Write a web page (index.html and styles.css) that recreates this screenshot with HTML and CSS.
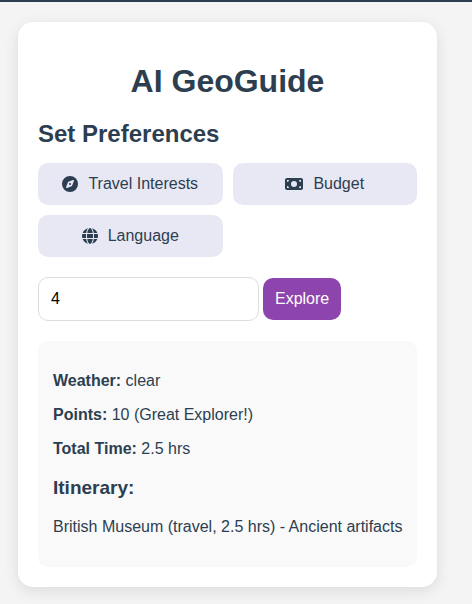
FILE: index.html
```html
<!DOCTYPE html>
<html lang="en">
<head>
<meta charset="utf-8">
<meta name="viewport" content="width=device-width, initial-scale=1">
<title>AI GeoGuide</title>
<link rel="stylesheet" href="styles.css">
</head>
<body>
<main class="card">
  <h1 class="title">AI GeoGuide</h1>
  <h2 class="section-title">Set Preferences</h2>
  <div class="preferences">
    <button class="preference" type="button">
      <svg class="icon" viewBox="0 0 512 512" aria-hidden="true"><path d="M256 512A256 256 0 1 0 256 0a256 256 0 1 0 0 512zm50.700-186.900L162.400 380.600c-19.400 7.500-38.500-11.600-31-31l55.500-144.300c3.300-8.500 9.900-15.100 18.400-18.400l144.300-55.500c19.400-7.500 38.500 11.600 31 31L325.100 306.700c-3.200 8.500-9.900 15.100-18.400 18.400zM288 256a32 32 0 1 0-64 0 32 32 0 1 0 64 0z"/></svg>
      Travel Interests
    </button>
    <button class="preference" type="button">
      <svg class="icon icon-wide" viewBox="0 0 576 512" aria-hidden="true"><path fill-rule="evenodd" d="M64 64C28.700 64 0 92.700 0 128v256c0 35.300 28.700 64 64 64h448c35.300 0 64-28.700 64-64V128c0-35.300-28.700-64-64-64H64zM64 384v-64c35.300 0 64 28.700 64 64H64zM64 192v-64h64c0 35.300-28.700 64-64 64zM512 384h-64c0-35.300 28.700-64 64-64v64zM512 192c-35.300 0-64-28.700-64-64h64v64zM288 160a96 96 0 1 1 0 192 96 96 0 1 1 0-192z"/></svg>
      Budget
    </button>
    <button class="preference" type="button">
      <svg class="icon" viewBox="0 0 512 512" aria-hidden="true"><path d="M352 256c0 22.200-1.200 43.600-3.300 64H163.300c-2.200-20.400-3.300-41.800-3.300-64s1.200-43.600 3.300-64h185.400c2.200 20.400 3.300 41.800 3.300 64zm28.800-64h123.100c5.300 20.500 8.100 41.900 8.100 64s-2.800 43.500-8.100 64H380.800c2.100-20.600 3.200-42 3.200-64s-1.100-43.400-3.200-64zm112.600-32H376.700c-10-63.900-29.800-117.400-55.300-151.600 78.300 20.700 142 77.500 171.900 151.600zm-149.100 0H167.700c6.100-36.400 15.500-68.600 27-94.700 10.500-23.600 22.200-40.700 33.500-51.500C239.400 3.200 248.700 0 256 0s16.600 3.200 27.800 13.800c11.300 10.800 23 27.900 33.500 51.500 11.600 26 20.900 58.200 27 94.700zm-209 0H18.600C48.600 85.900 112.200 29.100 190.600 8.400 165.100 42.600 145.300 96.100 135.300 160zM8.100 192h123.100c-2.100 20.600-3.200 42-3.200 64s1.100 43.400 3.200 64H8.100C2.800 299.500 0 278.100 0 256s2.800-43.500 8.100-64zm186.600 254.600c-11.600-26-20.900-58.200-27-94.600h176.600c-6.100 36.400-15.500 68.600-27 94.600-10.500 23.600-22.200 40.700-33.500 51.500C272.600 508.800 263.300 512 256 512s-16.600-3.200-27.800-13.800c-11.300-10.800-23-27.900-33.500-51.600zM135.300 352c10 63.900 29.800 117.400 55.300 151.600C112.200 482.900 48.600 426.100 18.600 352h116.700zm358.100 0c-30 74.100-93.600 130.900-171.900 151.600 25.500-34.200 45.200-87.700 55.300-151.600h116.600z"/></svg>
      Language
    </button>
  </div>
  <form class="explore-form">
    <input class="hours" type="text" value="4" aria-label="Available hours">
    <button class="explore" type="button">Explore</button>
  </form>
  <section class="results">
    <p><strong>Weather:</strong> clear</p>
    <p><strong>Points:</strong> 10 (Great Explorer!)</p>
    <p><strong>Total Time:</strong> 2.5 hrs</p>
    <h3>Itinerary:</h3>
    <p>British Museum (travel, 2.5 hrs) - Ancient artifacts</p>
  </section>
</main>
</body>
</html>
```
FILE: styles.css
```css
* {
  box-sizing: border-box;
}

body {
  margin: 0;
  padding: 20px 35px 17px 18px;
  border-top: 2px solid #2c3e50;
  background: #f4f4f4;
  color: #2c3e50;
  font: 16px/18px "Liberation Sans", Arial, sans-serif;
}

button,
input {
  font: inherit;
}

.card {
  padding: 20px;
  border-radius: 15px;
  background: #fff;
  box-shadow: 0 4px 15px rgba(0, 0, 0, 0.1);
}

.title {
  margin: 20px 0;
  font-size: 32px;
  line-height: 38px;
  text-align: center;
}

.section-title {
  margin: 20px 0 15px;
  font-size: 24px;
  line-height: 28px;
}

.preferences {
  display: grid;
  grid-template-columns: 1fr 1fr;
  gap: 10px;
}

.preference {
  display: flex;
  align-items: center;
  justify-content: center;
  gap: 10px;
  height: 42px;
  padding: 0;
  border: 0;
  border-radius: 10px;
  background: #e8e8f4;
  color: inherit;
}

.icon {
  width: 16px;
  height: 16px;
  fill: currentColor;
}

.icon-wide {
  width: 18px;
}

.explore-form {
  display: flex;
  align-items: center;
  gap: 4px;
  margin: 20px 0;
}

.hours {
  width: 58.3%;
  height: 44px;
  padding: 12px;
  border: 1px solid #ddd;
  border-radius: 10px;
  background: #fff;
  color: #000;
}

.explore {
  padding: 12px;
  border: 0;
  border-radius: 10px;
  background: #8e44ad;
  color: #fff;
}

.results {
  padding: 15px 10px 15px 15px;
  border-radius: 10px;
  background: #f9f9f9;
}

.results p {
  margin: 16px 0;
}

.results h3 {
  margin: 19px 0;
  font-size: 19px;
  line-height: 22px;
}
```
